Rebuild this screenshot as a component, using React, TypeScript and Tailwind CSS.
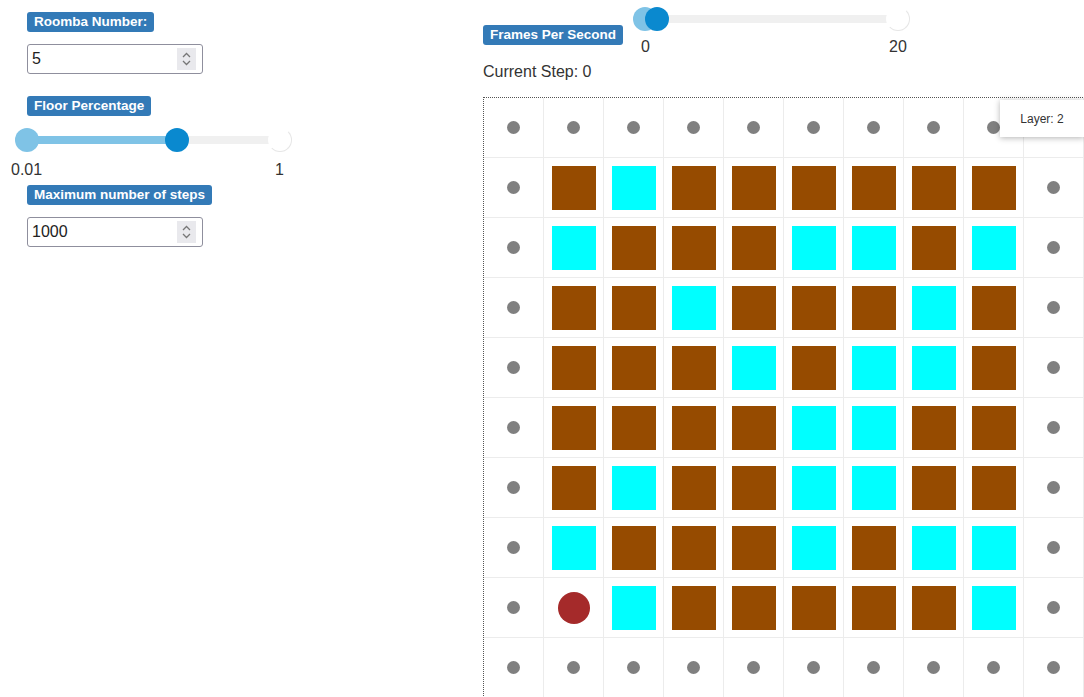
import React from 'react';

const FONT = { fontFamily: '"Liberation Sans", Arial, sans-serif' };

// B = floor tile, C = clean tile, R = roomba, . = empty with dot
const layout = [
  '..........',
  '.BCBBBBBB.',
  '.CBBBCCBC.',
  '.BBCBBBCB.',
  '.BBBCBCCB.',
  '.BBBBCCBB.',
  '.BCBBCCBB.',
  '.CBBBCBCC.',
  '.RCBBBBBC.',
  '..........',
];

function Badge({ children }: { children: React.ReactNode }) {
  return (
    <div className="flex">
      <span className="block bg-[#337ab7] text-white text-[13.5px] font-bold leading-[20px] h-[20px] px-[7px] rounded-[3px]">
        {children}
      </span>
    </div>
  );
}

function NumberBox({ value }: { value: string }) {
  return (
    <div className="w-[176px] h-[30px] border border-[#8f8f9d] rounded-[3px] flex items-center justify-between pl-[4px] pr-[6px] bg-white">
      <span className="text-[16px] text-[#222]">{value}</span>
      <div className="w-[19px] h-[22px] bg-[#e9e9ed] flex flex-col items-center justify-center gap-[2px]">
        <svg width="9" height="6" viewBox="0 0 9 6">
          <path d="M1 5 L4.5 1.5 L8 5" stroke="#777" strokeWidth="1.3" fill="none" />
        </svg>
        <svg width="9" height="6" viewBox="0 0 9 6">
          <path d="M1 1 L4.5 4.5 L8 1" stroke="#777" strokeWidth="1.3" fill="none" />
        </svg>
      </div>
    </div>
  );
}

function Thumb({ dark }: { dark?: boolean }) {
  return (
    <div
      className={`absolute top-1/2 -translate-y-1/2 -translate-x-1/2 w-[24px] h-[24px] rounded-full ${
        dark ? 'bg-[#0a89cf]' : 'bg-[#7fc3e6]'
      }`}
    />
  );
}

function Slider({
  width,
  from,
  to,
  end,
}: {
  width: number;
  from: number;
  to: number;
  end: number;
}) {
  return (
    <div className="relative h-[24px]" style={{ width }}>
      <div className="absolute top-[8px] h-[8px] left-0 rounded-full bg-[#f0f0f0]" style={{ width: end }} />
      <div className="absolute top-[8px] h-[8px] bg-[#7fc3e6]" style={{ left: from, width: to - from }} />
      <div
        className="absolute top-1/2 -translate-y-1/2 -translate-x-1/2 w-[24px] h-[24px] rounded-full bg-white border border-[#e6e6e6] border-t-transparent border-l-transparent"
        style={{ left: end }}
      />
      <div className="absolute inset-0" style={{ left: from }}>
        <Thumb />
      </div>
      <div className="absolute inset-0" style={{ left: to }}>
        <Thumb dark />
      </div>
    </div>
  );
}

function Cell({ kind }: { kind: string }) {
  return (
    <div className="w-[60px] h-[60px] border-r border-b border-[#ececec] flex items-center justify-center">
      {kind === '.' && <div className="w-[13px] h-[13px] rounded-full bg-[#808080]" />}
      {kind === 'B' && <div className="w-[44px] h-[44px] bg-[#964b00]" />}
      {kind === 'C' && <div className="w-[44px] h-[44px] bg-[#00ffff]" />}
      {kind === 'R' && <div className="w-[32px] h-[32px] rounded-full bg-[#a52a2a]" />}
    </div>
  );
}

export default function App() {
  return (
    <div className="w-[1084px] h-[697px] overflow-hidden bg-white flex text-[#333]" style={FONT}>
      {/* controls */}
      <div className="w-[483px] shrink-0 pt-[12px] flex flex-col">
        <div className="pl-[27px] flex flex-col">
          <Badge>Roomba Number:</Badge>
          <div className="mt-[12px]">
            <NumberBox value="5" />
          </div>
          <div className="mt-[22px]">
            <Badge>Floor Percentage</Badge>
          </div>
        </div>
        <div className="pl-[15px] mt-[12px]">
          <Slider width={290} from={12} to={162} end={265} />
          <div className="relative h-[18px] text-[16px] leading-[18px] mt-[9px]">
            <span className="absolute left-[-4px]">0.01</span>
            <span className="absolute left-[260px]">1</span>
          </div>
        </div>
        <div className="pl-[27px] mt-[6px] flex flex-col">
          <Badge>Maximum number of steps</Badge>
          <div className="mt-[12px]">
            <NumberBox value="1000" />
          </div>
        </div>
      </div>

      {/* simulation */}
      <div className="flex-1 min-w-0">
        <div className="flex items-start h-[60px]">
          <div className="mt-[25px]">
            <Badge>Frames Per Second</Badge>
          </div>
          <div className="ml-[16px] mt-[7px]">
            <Slider width={290} from={6} to={18} end={259} />
            <div className="w-[290px] relative h-[18px] text-[16px] leading-[18px] mt-[7px]">
              <span className="absolute left-[2px]">0</span>
              <span className="absolute left-[250px]">20</span>
            </div>
          </div>
        </div>
        <div className="text-[16px] leading-[20px] h-[37px] pt-[2px]">Current Step: 0</div>
        <div className="relative border-l border-t border-dotted border-[#555] w-[602px]">
          <div className="grid grid-cols-[repeat(10,60px)]">
            {layout.flatMap((row, r) =>
              row.split('').map((k, c) => <Cell key={`${r}-${c}`} kind={k} />)
            )}
          </div>
          <div className="absolute top-[2px] left-[516px] w-[84px] h-[37px] bg-white shadow-[0_1px_6px_rgba(0,0,0,0.3)] flex items-center justify-center text-[12px] font-medium text-[#333]">
            Layer: 2
          </div>
        </div>
      </div>
    </div>
  );
}
